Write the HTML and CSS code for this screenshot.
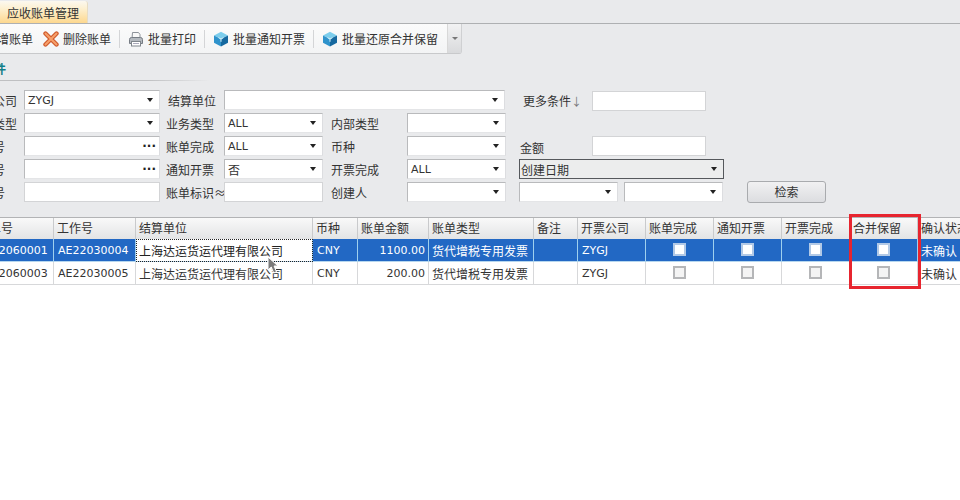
FILE: index.html
```html
<!DOCTYPE html>
<html lang="zh">
<head>
<meta charset="utf-8">
<title>应收账单管理</title>
<link rel="stylesheet" href="styles.css">
</head>
<body>
<div class="page">
  <div class="tabbar"><div class="tab">应收账单管理</div></div>

  <div class="toolrow">
  <div class="toolbar">
    <div class="tool tool-first"><span>新增账单</span></div>
    <div class="tool">
      <svg class="ico" width="16" height="16" viewBox="0 0 16 16"><path d="M2.5 2.5 13.5 13.5M13.5 2.5 2.5 13.5" stroke="#cf5a2c" stroke-width="4.4" stroke-linecap="round" fill="none"/><path d="M2.5 2.5 13.5 13.5M13.5 2.5 2.5 13.5" stroke="#f7a06a" stroke-width="2" stroke-linecap="round" fill="none"/></svg>
      <span>删除账单</span>
    </div>
    <i class="sep"></i>
    <div class="tool">
      <svg class="ico" width="16" height="16" viewBox="0 0 16 16"><path d="M4.5 1.5h6l1.5 2v4h-8z" fill="#f8f8f8" stroke="#8d9299"/><path d="M1.5 8.5q0-2 2-2h9q2 0 2 2v4h-13z" fill="#b4b9bf" stroke="#767c84"/><rect x="3.5" y="10.5" width="9" height="4.5" fill="#fff" stroke="#7f858c"/><path d="M5 12.5h6" stroke="#aab"/></svg>
      <span>批量打印</span>
    </div>
    <i class="sep"></i>
    <div class="tool">
      <svg class="ico" width="16" height="16" viewBox="0 0 16 16"><path d="M8 .8 15 4.4 8 8 1 4.4z" fill="#7ccdec"/><path d="M1 4.4 8 8v7.4L1 11.8z" fill="#2f93cc"/><path d="M15 4.4 8 8v7.4l7-3.6z" fill="#15689f"/><path d="M8 8 5.5 6.7M8 8l2.500-1.300M8 8v2.800" stroke="#d8f3fb" stroke-width="1"/></svg>
      <span>批量通知开票</span>
    </div>
    <i class="sep"></i>
    <div class="tool">
      <svg class="ico" width="16" height="16" viewBox="0 0 16 16"><path d="M8 .8 15 4.4 8 8 1 4.4z" fill="#7ccdec"/><path d="M1 4.4 8 8v7.4L1 11.8z" fill="#2f93cc"/><path d="M15 4.4 8 8v7.4l7-3.6z" fill="#15689f"/><path d="M8 8 5.5 6.7M8 8l2.500-1.300M8 8v2.800" stroke="#d8f3fb" stroke-width="1"/></svg>
      <span>批量还原合并保留</span>
    </div>
    <div class="overflow"><i class="tri tri-gray"></i></div>
  </div>
  </div>

  <div class="panel">
    <div class="heading">查询条件</div>
    <div class="form">
      <label class="lab c1">开票公司</label>
      <div class="field c2"><span class="val">ZYGJ</span><i class="tri"></i></div>
      <label class="lab c3 first">结算单位</label>
      <div class="field span-wide"><i class="tri"></i></div>
      <label class="lab c8 more">更多条件<small>↓</small></label>
      <div class="field plain c9 low"></div>

      <label class="lab c1">单据类型</label>
      <div class="field c2"><i class="tri"></i></div>
      <label class="lab c3">业务类型</label>
      <div class="field c4"><span class="val">ALL</span><i class="tri"></i></div>
      <label class="lab c5">内部类型</label>
      <div class="field c6"><i class="tri"></i></div>

      <label class="lab c1">账单号</label>
      <div class="field c2"><b class="dots">···</b></div>
      <label class="lab c3">账单完成</label>
      <div class="field c4"><span class="val">ALL</span><i class="tri"></i></div>
      <label class="lab c5">币种</label>
      <div class="field c6"><i class="tri"></i></div>
      <label class="lab c8 amount">金额</label>
      <div class="field plain c9"></div>

      <label class="lab c1">发票号</label>
      <div class="field c2"><b class="dots">···</b></div>
      <label class="lab c3">通知开票</label>
      <div class="field c4"><span class="val-cn">否</span><i class="tri"></i></div>
      <label class="lab c5">开票完成</label>
      <div class="field c6"><span class="val">ALL</span><i class="tri"></i></div>
      <div class="field dark c8-wide"><span class="val-cn">创建日期</span><i class="tri"></i></div>

      <label class="lab c1">工作号</label>
      <div class="field plain c2"></div>
      <label class="lab c3">账单标识≈</label>
      <div class="field plain c4"></div>
      <label class="lab c5">创建人</label>
      <div class="field c6"><i class="tri"></i></div>
      <div class="range">
        <div class="field half"><i class="tri"></i></div>
        <div class="field half"><i class="tri"></i></div>
        <button class="search" type="button">检索</button>
      </div>
    </div>
  </div>

  <table class="grid">
    <colgroup>
      <col class="w80"><col class="w82"><col class="w177"><col class="w45"><col class="w71"><col class="w105"><col class="w44"><col class="w68"><col class="w68"><col class="w68"><col class="w68"><col class="w68"><col class="w83">
    </colgroup>
    <thead>
      <tr><th>账单号</th><th>工作号</th><th>结算单位</th><th>币种</th><th>账单金额</th><th>账单类型</th><th>备注</th><th>开票公司</th><th>账单完成</th><th>通知开票</th><th>开票完成</th><th>合并保留</th><th>确认状态</th></tr>
    </thead>
    <tbody>
      <tr class="selected">
        <td class="lat">YS22060001</td><td class="lat">AE22030004</td><td class="focus">上海达运货运代理有限公司</td><td class="lat">CNY</td><td class="lat num">1100.00</td><td>货代增税专用发票</td><td></td><td class="lat">ZYGJ</td>
        <td class="chk"><i class="box"></i></td><td class="chk"><i class="box"></i></td><td class="chk"><i class="box"></i></td><td class="chk"><i class="box"></i></td><td>未确认</td>
      </tr>
      <tr>
        <td class="lat">YS22060003</td><td class="lat">AE22030005</td><td>上海达运货运代理有限公司</td><td class="lat">CNY</td><td class="lat num">200.00</td><td>货代增税专用发票</td><td></td><td class="lat">ZYGJ</td>
        <td class="chk"><i class="box"></i></td><td class="chk"><i class="box"></i></td><td class="chk"><i class="box"></i></td><td class="chk"><i class="box"></i></td><td>未确认</td>
      </tr>
    </tbody>
  </table>

  <div class="redbox"></div>
  <svg class="cursor" width="14" height="19" viewBox="0 0 14 19"><path d="M1 1v13l3.300-3 2.400 6 2.800-1.200-2.400-5.800H11z" fill="#7a7a7a" stroke="#fff" stroke-width="1"/></svg>
</div>
</body>
</html>
```
FILE: styles.css
```css
* { box-sizing: border-box; }
html, body { margin: 0; padding: 0; }
body { background: #fff; color: #2e2e2e; font: 12px/16px "Noto Sans CJK SC", "Liberation Sans", sans-serif; }
.page { position: relative; width: 960px; height: 500px; overflow: hidden; background: #fff; }

.tabbar { height: 24px; padding-top: 1px; background: #e9eaec; border-bottom: 1px solid #aeb0b2; }
.tab { width: 88px; height: 22px; padding: 4px 0 0 7px; line-height: 16px; color: #333; border-right: 1px solid #e6dcc4; border-radius: 0 3px 0 0; background: linear-gradient(#fbf8f0, #fdf0d0 35%, #fdd88f); }

.toolrow { height: 30px; background: #e9eaec; }
.toolbar { display: flex; align-items: center; width: 462px; height: 30px; border-radius: 0 0 3px 0; border-right: 1px solid #cfd0d2; border-bottom: 1px solid #c8c9cb; background: linear-gradient(#fbfbfb, #f3f4f5); }
.tool { display: flex; align-items: center; gap: 4px; flex: none; color: #333; }
.tool-first { margin-left: -15px; margin-right: 10px; }
.ico { display: block; flex: none; }
.sep { flex: none; width: 1px; height: 18px; margin: 0 8px; background: #d4d5d7; }
.overflow { display: flex; align-items: center; justify-content: center; width: 15px; height: 29px; margin-left: 9px; border-left: 1px solid #d8d8d8; background: linear-gradient(#f2f2f3, #d9dadc); }

.tri { display: block; width: 0; height: 0; border-left: 3.5px solid transparent; border-right: 3.5px solid transparent; border-top: 4px solid #222; }
.tri-gray { border-left-width: 3px; border-right-width: 3px; border-top: 3px solid #777; }

.panel { height: 163px; background: #e9eaec; }
.heading { height: 27px; padding: 7px 0 0 0; margin-left: -42px; width: 252px; font-weight: 700; line-height: 16px; color: #137f89; background: linear-gradient(90deg, #bfc0c2, #bfc0c2 75%, rgba(191,192,194,0)) left bottom / 100% 1px no-repeat; }
.form { display: grid; grid-template-columns: 55px 136px 64px 99px 84px 99px 13px 73px 114px 1fr; grid-auto-rows: 20px; row-gap: 3px; width: 991px; margin: 9px 0 0 -31px; }
.lab { display: block; line-height: 16px; padding-top: 3px; color: #333; white-space: nowrap; }
.c1 { grid-column: 1; }
.c2 { grid-column: 2; }
.c3 { grid-column: 3; padding-left: 6px; }
.c3.first { padding-left: 8px; }
.c4 { grid-column: 4; }
.c5 { grid-column: 5; padding-left: 8px; }
.c6 { grid-column: 6; }
.c8 { grid-column: 7 / 9; padding-left: 17px; }
.c9 { grid-column: 9; }
.c8-wide { grid-column: 8 / 11; width: 205px; }
.span-wide { grid-column: 4 / 7; width: 281px; }
.amount { padding-left: 14px; padding-top: 4px; }
.more { padding-top: 3px; }
.more small { font-size: 11px; color: #777; }
.low { margin-top: 1px; }

.field { display: flex; align-items: center; justify-content: space-between; height: 20px; padding: 0 3px 0 3px; background: #fff; border: 1px solid #b9babc; border-right-color: #dcdde0; border-bottom-color: #e4e5e7; }
.field > .tri { margin-left: auto; margin-right: 3px; }
.plain { border-color: #d3d4d6; }
.dark { padding-left: 1px; background: #eceded; border: 1px solid #55585c; }
.val { padding-top: 2px; font: 11px/16px "DejaVu Sans", sans-serif; color: #333; }
.val-cn { padding-top: 1px; line-height: 16px; color: #333; }
.dots { margin-left: auto; font: 700 12px/12px "DejaVu Sans", sans-serif; color: #222; }

.range { grid-column: 8 / 11; display: flex; align-items: center; height: 20px; }
.half { flex: none; width: 99px; margin-right: 6px; }
.search { flex: none; width: 79px; height: 22px; margin: 0 0 0 18px; padding: 0; font: 12px/16px "Noto Sans CJK SC", sans-serif; color: #333; border: 1px solid #a9abae; border-radius: 3px; background: linear-gradient(#f1f1f2, #dcdde0); }

.grid { width: 1027px; margin-left: -26px; border-collapse: separate; border-spacing: 0; table-layout: fixed; border-top: 1px solid #b2b3b5; }
.w80 { width: 80px; } .w82 { width: 82px; } .w177 { width: 177px; } .w45 { width: 45px; } .w71 { width: 71px; } .w105 { width: 105px; } .w44 { width: 44px; } .w68 { width: 68px; } .w83 { width: 83px; }
.grid th { height: 21px; padding: 0 3px 1px; font-weight: 400; text-align: left; white-space: nowrap; overflow: hidden; color: #333; border-right: 1px solid #c9cacc; background: linear-gradient(#f9f9f9, #e3e4e5); }
.grid td { height: 23px; padding: 1px 3px 0; white-space: nowrap; overflow: hidden; color: #333; background: #fff; border-right: 1px solid #d7d8da; border-bottom: 1px solid #d7d8da; }
.grid td.lat { padding-left: 4px; font: 11px/16px "DejaVu Sans", sans-serif; }
.grid td.num { text-align: right; }
.grid .selected td { color: #fff; background: #2268c4; border-right-color: #9fd0ee; border-bottom-color: #b6d7ef; }
.grid .selected td.focus { color: #222; background: #fff; outline: 1px dotted #222; outline-offset: -1px; }
.grid td.chk { padding: 0; text-align: center; }
.box { display: block; width: 13px; height: 13px; margin: -2px auto 0; background: #f4f4f4; border: 2px solid #b5b6b8; }
.selected .box { background: #fff; border-color: #b2c9e6; }

.redbox { position: absolute; left: 849px; top: 214px; width: 72px; height: 75px; border: 3px solid #e7252f; pointer-events: none; }
.cursor { position: absolute; left: 267px; top: 256px; }
```
